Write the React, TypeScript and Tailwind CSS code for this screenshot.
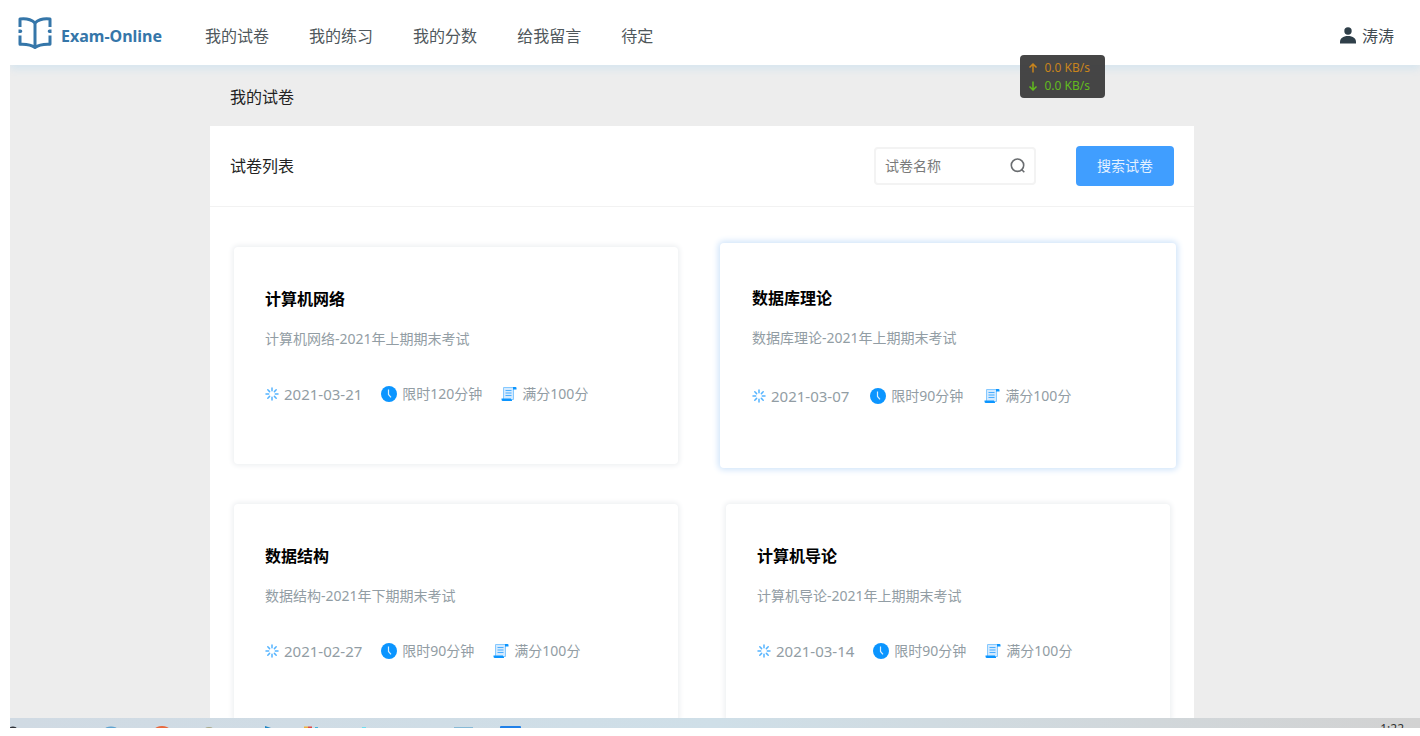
import React from "react";

type Exam = {
  title: string;
  description: string;
  date: string;
  minutes: number;
  score: number;
  active?: boolean;
};

const exams: Exam[] = [
  { title: "计算机网络", description: "计算机网络-2021年上期期末考试", date: "2021-03-21", minutes: 120, score: 100 },
  { title: "数据库理论", description: "数据库理论-2021年上期期末考试", date: "2021-03-07", minutes: 90, score: 100, active: true },
  { title: "数据结构", description: "数据结构-2021年下期期末考试", date: "2021-02-27", minutes: 90, score: 100 },
  { title: "计算机导论", description: "计算机导论-2021年上期期末考试", date: "2021-03-14", minutes: 90, score: 100 },
];

const navItems = ["我的试卷", "我的练习", "我的分数", "给我留言", "待定"];

function BookLogo() {
  return (
    <svg viewBox="0 0 34 38" className="h-[38px] w-[34px] text-[#3576a9]" fill="none" stroke="currentColor" strokeWidth="3" aria-hidden="true">
      <path d="M17 5.5V30" />
      <path d="M2 10V2C8 1.200 13 2.400 17 5.800C21 2.400 26 1.200 32 2V10" strokeLinejoin="round" />
      <path d="M2 18.500V27.300C8 27 13 27.500 17 30.500C21 27.500 26 27 32 27.300V18.500" strokeLinejoin="round" />
      <path d="M.5 12.500h2a1.800 1.800 0 0 1 0 3.600h-2zM33.500 12.500h-2a1.800 1.800 0 0 0 0 3.600h2z" fill="currentColor" stroke="none" />
    </svg>
  );
}

function UserIcon() {
  return (
    <svg viewBox="0 0 16 17" className="h-[17px] w-4" fill="#2f3f49" aria-hidden="true">
      <circle cx="8" cy="4" r="3.700" />
      <path d="M0 16.500V15C0 11.500 3 9 8 9s8 2.500 8 6v1.500z" />
    </svg>
  );
}

function SearchIcon() {
  return (
    <svg viewBox="0 0 16 16" className="h-4 w-4" fill="none" stroke="#6a6d70" strokeWidth="1.600" aria-hidden="true">
      <circle cx="7.500" cy="7.200" r="6.200" />
      <path d="M11.300 11.300L14.300 14.300" />
    </svg>
  );
}

function BurstIcon() {
  return (
    <svg viewBox="0 0 14 14" className="h-3.5 w-3.5" stroke="#55b4ff" strokeWidth="1.500" strokeLinecap="round" aria-hidden="true">
      <path d="M7 1v2.700M7 10.300V13M1 7h2.700M10.300 7H13M2.800 2.800l1.800 1.800M9.400 9.400l1.800 1.800M2.800 11.200l1.800-1.800M9.400 4.600l1.800-1.800" />
    </svg>
  );
}

function ClockIcon() {
  return (
    <svg viewBox="0 0 16 16" className="h-4 w-4" aria-hidden="true">
      <circle cx="8" cy="8" r="8" fill="#0b95ff" />
      <path d="M7.500 3.500V8.500L10 11.300" fill="none" stroke="#d9efff" strokeWidth="1.200" />
    </svg>
  );
}

function ScrollIcon() {
  return (
    <svg viewBox="0 0 16 16" className="h-4 w-4" fill="none" aria-hidden="true">
      <path d="M2.500 1.500H12.500V13.500H2.500z" fill="#d3eaff" stroke="#86c9ff" />
      <path d="M12 1h2.500a1 1 0 0 1 1 1v1.500H12z" fill="#0b95ff" />
      <path d="M4.500 4.500h6M4.500 7h6M4.500 9.500h6" stroke="#4aaeff" strokeWidth="1.200" />
      <path d="M.5 12.500H10V13.500H11V15H2A1.500 1.500 0 0 1 .5 13.500z" fill="#0b95ff" />
    </svg>
  );
}

function ExamCard({ exam }: { exam: Exam }) {
  return (
    <article
      className={
        exam.active
          ? "-mx-1.5 -my-1 rounded bg-white px-8 pt-[43px] pb-[59px] shadow-[0_0_6px_2px_#d0e4fa]"
          : "rounded bg-white px-[31px] pt-10 pb-[58px] shadow-[0_0_5px_2px_#eff1f3]"
      }
    >
      <h3 className="text-base leading-6 font-bold text-black">{exam.title}</h3>
      <p className="mt-4 text-sm leading-6 text-[#929da4]">{exam.description}</p>
      <ul className={exam.active ? "mt-[34px] flex gap-[21px] leading-6 text-[#929da4]" : "mt-[31px] flex gap-[19px] leading-6 text-[#929da4]"}>
        <li className="flex items-center gap-[5px] text-[15px]">
          <BurstIcon />
          <time>{exam.date}</time>
        </li>
        <li className="flex items-center gap-[5px] text-sm">
          <ClockIcon />
          <span>限时{exam.minutes}分钟</span>
        </li>
        <li className="flex items-center gap-[5px] text-sm">
          <ScrollIcon />
          <span>满分{exam.score}分</span>
        </li>
      </ul>
    </article>
  );
}

function SpeedMeter() {
  return (
    <div className="absolute top-[55px] right-[315px] z-20 rounded-sm bg-[#3c3c3c]/95 pt-1 pr-[15px] pb-[3px] pl-2 text-xs leading-[18px]">
      <p className="flex items-center gap-1.5 text-[#c8841c]">
        <svg viewBox="0 0 10 10" className="h-2.5 w-2.5" fill="none" stroke="currentColor" strokeWidth="1.500" aria-hidden="true">
          <path d="M5 9.500V1.500M1.500 4.500L5 1L8.500 4.500" />
        </svg>
        0.0 KB/s
      </p>
      <p className="flex items-center gap-1.5 text-[#62bb1e]">
        <svg viewBox="0 0 10 10" className="h-2.5 w-2.5" fill="none" stroke="currentColor" strokeWidth="1.500" aria-hidden="true">
          <path d="M5 .5V8.500M1.500 5.500L5 9L8.500 5.500" />
        </svg>
        0.0 KB/s
      </p>
    </div>
  );
}

function Taskbar() {
  return (
    <footer className="relative z-10 flex h-2.5 shrink-0 items-start justify-between overflow-hidden bg-linear-to-r from-[#d0dae3] via-[#cfdfe8] to-[#d2d2d2]">
      <svg viewBox="0 0 530 10" className="h-2.5 w-[530px]" aria-hidden="true">
        <ellipse cx="3" cy="11" rx="4" ry="2.500" fill="#30343a" />
        <ellipse cx="101" cy="11" rx="6" ry="2.500" fill="#5fa3d0" />
        <ellipse cx="152" cy="11" rx="7" ry="3" fill="#e8683c" />
        <ellipse cx="199" cy="11" rx="4" ry="2" fill="#a9a98a" />
        <path d="M255 8l6 2h-6z" fill="#1f86c4" />
        <path d="M294 8.500h4V10h-4z" fill="#efb23c" />
        <path d="M298 8.500h4V10h-4z" fill="#dc4a4a" />
        <path d="M305 9h3v1h-3z" fill="#46b4dc" />
        <path d="M352 9h4v1h-4z" fill="#6fdcf0" />
        <path d="M444 9h19v1h-19z" fill="#86b9d6" />
        <path d="M490 10V9q0-1 1-1h19q1 0 1 1v1z" fill="#2080e8" />
      </svg>
      <time className="mt-0.5 pr-4 text-xs leading-[18px] text-[#333]">1:22</time>
    </footer>
  );
}

export default function App() {
  return (
    <div className="h-screen bg-white pb-2 pl-2.5 font-['Noto_Sans','Noto_Sans_CJK_SC',sans-serif]">
      <div className="relative flex h-full flex-col overflow-hidden bg-[#ededed]">
        <header className="relative z-10 flex h-[65px] shrink-0 items-center justify-between bg-white pt-1.5 pr-[26px] pl-2 shadow-[0_4px_8px_#d6e5ef]">
          <div className="flex items-center">
            <a href="#home" className="flex items-center gap-[9px] text-base font-bold text-[#3576a9]">
              <BookLogo />
              Exam-Online
            </a>
            <nav className="ml-[43px] flex gap-10 text-base text-[#50585c]">
              {navItems.map((item) => (
                <a key={item} href={"#" + item}>{item}</a>
              ))}
            </nav>
          </div>
          <a href="#user" className="flex items-center gap-1.5 text-base text-[#3f4a50]">
            <UserIcon />
            涛涛
          </a>
        </header>
        <SpeedMeter />
        <main className="flex min-h-0 flex-1 flex-col pr-[226px] pl-[200px]">
          <h1 className="shrink-0 pt-[21px] pb-[17px] pl-5 text-base leading-[23px] text-[#222]">我的试卷</h1>
          <section className="min-h-0 flex-1 overflow-hidden bg-white">
            <div className="flex h-[81px] items-center justify-between border-b border-[#f2f2f2] px-5">
              <h2 className="text-base text-[#222]">试卷列表</h2>
              <form className="flex items-center gap-10" onSubmit={(e) => e.preventDefault()}>
                <label className="flex h-[38px] w-[162px] items-center rounded-sm border-2 border-[#f3f3f3] bg-white pr-2 pl-[9px]">
                  <input
                    type="text"
                    aria-label="试卷名称"
                    placeholder="试卷名称"
                    className="min-w-0 flex-1 bg-transparent text-sm outline-none placeholder:text-[#7a7a7a]"
                  />
                  <SearchIcon />
                </label>
                <button type="submit" className="h-10 rounded-sm bg-[#409eff] px-[21px] text-sm text-[#e4f1ff]">
                  搜索试卷
                </button>
              </form>
            </div>
            <div className="grid grid-cols-2 gap-x-12 gap-y-10 px-6 py-10">
              {exams.map((exam) => (
                <ExamCard key={exam.title} exam={exam} />
              ))}
            </div>
          </section>
        </main>
        <Taskbar />
      </div>
    </div>
  );
}
